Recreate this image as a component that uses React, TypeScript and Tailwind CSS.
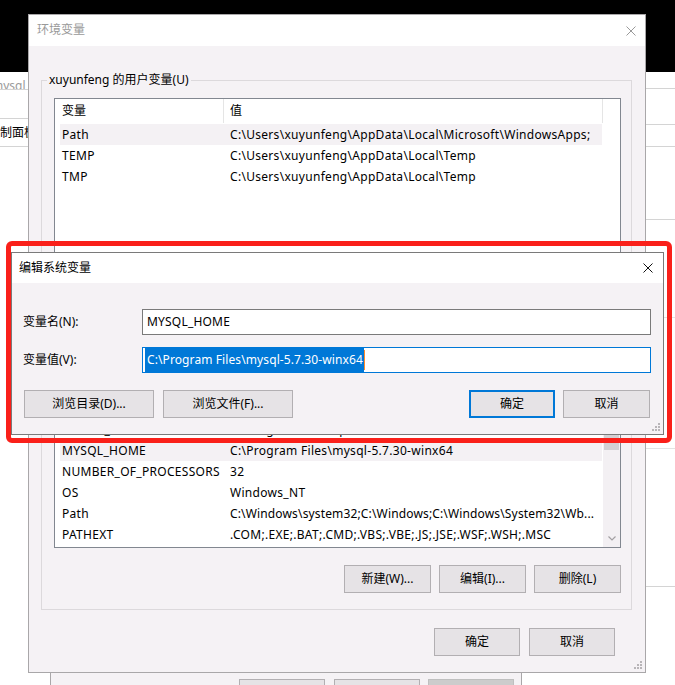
import React from "react";

type EnvVar = { name: string; value: string; active?: boolean; tight?: boolean };

const userVars: EnvVar[] = [
  { name: "Path", value: "C:\\Users\\xuyunfeng\\AppData\\Local\\Microsoft\\WindowsApps;", active: true },
  { name: "TEMP", value: "C:\\Users\\xuyunfeng\\AppData\\Local\\Temp" },
  { name: "TMP", value: "C:\\Users\\xuyunfeng\\AppData\\Local\\Temp" },
];

const systemVars: EnvVar[] = [
  { name: "ComSpec", value: "C:\\Windows\\system32\\cmd.exe" },
  { name: "DriverData", value: "C:\\Windows\\System32\\Drivers\\DriverData" },
  { name: "JAVA_HOME", value: "C:\\Program Files\\Java\\jdk1.8.0_201" },
  { name: "MAVEN_HOME", value: "C:\\Program Files\\apache-maven-3.6.3" },
  { name: "MYSQL_HOME", value: "C:\\Program Files\\mysql-5.7.30-winx64", active: true },
  { name: "NUMBER_OF_PROCESSORS", value: "32" },
  { name: "OS", value: "Windows_NT" },
  { name: "Path", value: "C:\\Windows\\system32;C:\\Windows;C:\\Windows\\System32\\Wb...", tight: true },
  { name: "PATHEXT", value: ".COM;.EXE;.BAT;.CMD;.VBS;.VBE;.JS;.JSE;.WSF;.WSH;.MSC" },
];

function CloseIcon({ color }: { color: string }) {
  return (
    <svg width="10" height="10" viewBox="0 0 10 10">
      <path d="M0.5 0.5L9.5 9.5M9.5 0.5L0.5 9.5" stroke={color} strokeWidth="1" />
    </svg>
  );
}

function SizeGrip() {
  return (
    <svg width="8" height="8" viewBox="0 0 8 8" fill="#b8b5b8">
      <rect x="6" y="0" width="2" height="2" />
      <rect x="3" y="3" width="2" height="2" />
      <rect x="6" y="3" width="2" height="2" />
      <rect x="0" y="6" width="2" height="2" />
      <rect x="3" y="6" width="2" height="2" />
      <rect x="6" y="6" width="2" height="2" />
    </svg>
  );
}

function Button({
  children,
  primary,
  className = "",
}: {
  children?: React.ReactNode;
  primary?: boolean;
  className?: string;
}) {
  return (
    <div
      className={`flex h-[28px] shrink-0 items-center justify-center bg-[#e6e3e6] ${
        primary ? "border-2 border-[#0078d7]" : "border border-[#b2afb2]"
      } ${className}`}
    >
      {children}
    </div>
  );
}

function VarList({ rows, scroll }: { rows: EnvVar[]; scroll?: boolean }) {
  return (
    <div className="flex h-full border border-[#828790] bg-white">
      <div className="flex min-w-0 flex-1 flex-col overflow-hidden">
        <div className="flex h-[24px] shrink-0">
          <div className="flex w-[169px] shrink-0 items-center border-r border-[#e5e5e5] pl-[7px]">变量</div>
          <div className="flex w-[379px] shrink-0 items-center border-r border-[#e5e5e5] pl-[6px]">值</div>
          <div className="flex-1" />
        </div>
        <div className="pt-px">
          {rows.map((r) => (
            <div
              key={r.name + r.value}
              className={`ml-[5px] flex h-[21px] w-[542px] items-center ${r.active ? "bg-[#f4f1f4]" : ""}`}
            >
              <div className="w-[168px] shrink-0 overflow-hidden whitespace-nowrap pl-[2px] tracking-[0.3px]">
                {r.name}
              </div>
              <div
                className={`min-w-0 flex-1 overflow-hidden whitespace-nowrap pl-[2px] ${
                  r.tight ? "tracking-[0.15px]" : "tracking-[0.3px]"
                }`}
              >
                {r.value}
              </div>
            </div>
          ))}
        </div>
      </div>
      {scroll && (
        <div className="flex w-[17px] shrink-0 flex-col bg-[#f3f0f3]">
          <div className="h-[17px]" />
          <div className="mx-px h-[102px] bg-[#d3d0d3]" />
          <div className="flex-1" />
          <div className="flex h-[17px] items-center justify-center">
            <svg width="8" height="5" viewBox="0 0 8 5">
              <path d="M0.5 0.5L4 4L7.5 0.5" stroke="#a3a0a3" strokeWidth="1.2" fill="none" />
            </svg>
          </div>
        </div>
      )}
    </div>
  );
}

function EnvDialog() {
  return (
    <div className="absolute left-[28px] top-[14px] flex h-[659px] w-[618px] flex-col border border-[#a9a7a9] bg-[#f5f2f5]">
      <div className="flex h-[31px] shrink-0 items-center justify-between bg-white pl-[8px] pr-[9px] text-[#999999]">
        <span className="-mt-px">环境变量</span>
        <CloseIcon color="#999999" />
      </div>

      <div className="flex flex-1 flex-col pt-[26px]">
        {/* 用户变量 */}
        <fieldset className="ml-[12px] mr-[13px] border border-[#dcd9dc] pb-[13px] pl-[12px] pr-[10px] pt-[10px]">
          <legend className="-ml-[7px] px-[2px] leading-[16px]">xuyunfeng 的用户变量(U)</legend>
          <div className="h-[185px]">
            <VarList rows={userVars} />
          </div>
        </fieldset>

        {/* 系统变量 */}
        <fieldset className="ml-[12px] mr-[13px] mt-[7px] border border-[#dcd9dc] pb-[16px] pl-[12px] pr-[10px] pt-[10px]">
          <legend className="-ml-[7px] px-[2px] leading-[16px]">系统变量(S)</legend>
          <div className="h-[218px]">
            <VarList rows={systemVars} scroll />
          </div>
          <div className="mt-[17px] flex justify-end gap-[8px]">
            <Button className="w-[87px]">新建(W)...</Button>
            <Button className="w-[87px]">编辑(I)...</Button>
            <Button className="w-[87px]">删除(L)</Button>
          </div>
        </fieldset>

        <div className="mt-[18px] flex justify-end gap-[9px] pr-[30px]">
          <Button className="w-[86px]">确定</Button>
          <Button className="w-[86px]">取消</Button>
        </div>
        <div className="mt-auto flex justify-end pb-[3px] pr-[3px]">
          <SizeGrip />
        </div>
      </div>
    </div>
  );
}

function EditDialog() {
  return (
    <div className="absolute left-[11px] top-[252px] flex h-[183px] w-[653px] flex-col border border-[#7a7a7a] bg-[#f5f2f5]">
      <div className="flex h-[30px] shrink-0 items-center justify-between bg-white pl-[7px] pr-[10px]">
        <span>编辑系统变量</span>
        <CloseIcon color="#111111" />
      </div>

      <div className="flex flex-1 flex-col pt-[26px]">
        <div className="flex h-[26px] items-center">
          <div className="w-[130px] shrink-0 pl-[11px]">变量名(N):</div>
          <div className="flex h-full w-[509px] items-center border border-[#7a7a7a] bg-white pl-[4px] tracking-[0.2px]">
            MYSQL_HOME
          </div>
        </div>
        <div className="mt-[12px] flex h-[26px] items-center">
          <div className="w-[130px] shrink-0 pl-[11px]">变量值(V):</div>
          <div className="flex h-full w-[509px] items-stretch border border-[#0078d7] bg-white pl-[2px]">
            <span className="flex items-center bg-[#0078d7] pl-[2px] pr-px tracking-[0.1px] text-white">
              C:\Program Files\mysql-5.7.30-winx64
            </span>
            <span className="my-[2px] w-px bg-[#ff8a2a]" />
          </div>
        </div>

        <div className="mt-[17px] flex pl-[12px] pr-[13px]">
          <Button className="w-[130px]">浏览目录(D)...</Button>
          <Button className="ml-[9px] w-[130px]">浏览文件(F)...</Button>
          <Button primary className="ml-auto w-[86px]">
            确定
          </Button>
          <Button className="ml-[8px] w-[87px]">取消</Button>
        </div>
        <div className="mt-auto flex justify-end pb-[3px] pr-[3px]">
          <SizeGrip />
        </div>
      </div>
    </div>
  );
}

export default function App() {
  return (
    <div className="relative h-[685px] w-[675px] overflow-hidden bg-white font-['Noto_Sans','Noto_Sans_CJK_SC',sans-serif] text-[12px] text-black">
      <div className="h-[72px] bg-black" />

      {/* window behind */}
      <div className="flex justify-between">
        <div className="flex w-[28px] flex-col">
          <div className="flex h-[18px] items-end overflow-hidden border-b border-[#d4d4d4] text-[#9a9a9a]">
            <span className="-mb-[6px] -ml-[8px] whitespace-nowrap">mysql</span>
          </div>
          <div className="h-[29px] border-b border-[#d4d4d4]" />
          <div className="flex h-[28px] items-center border-b border-[#d4d4d4]">
            <span className="-ml-[12px] whitespace-nowrap">控制面板</span>
          </div>
        </div>
        <div className="flex w-[30px] flex-col">
          <div className="h-[17px] border-b border-[#d4d4d4]" />
          <div className="h-[36px] border-b border-[#d4d4d4]" />
          <div className="h-[22px] border-b border-[#d4d4d4]" />
          <div className="h-[73px] border-b border-[#d4d4d4]" />
          <div className="h-[98px] border-b border-[#e3e3e3]" />
          <div className="h-[131px] border-b border-[#e3e3e3]" />
          <div className="h-[138px] border-b border-[#d4d4d4]" />
        </div>
      </div>

      <div className="absolute left-[50px] top-[650px] flex h-[50px] w-[472px] border-x border-[#a9a7a9] bg-[#f5f2f5] pl-[188px] pt-[29px]">
        <Button className="w-[86px]" />
        <Button className="ml-[9px] w-[86px]" />
        <div className="ml-[8px] h-[28px] w-[86px] border border-[#bfbfbf] bg-[#cccccc]" />
      </div>

      <EnvDialog />
      <EditDialog />

      {/* annotation */}
      <div className="pointer-events-none absolute left-[6px] top-[241px] h-[202px] w-[666px] rounded-[6px] border-[5px] border-[#fa201a]" />
    </div>
  );
}
